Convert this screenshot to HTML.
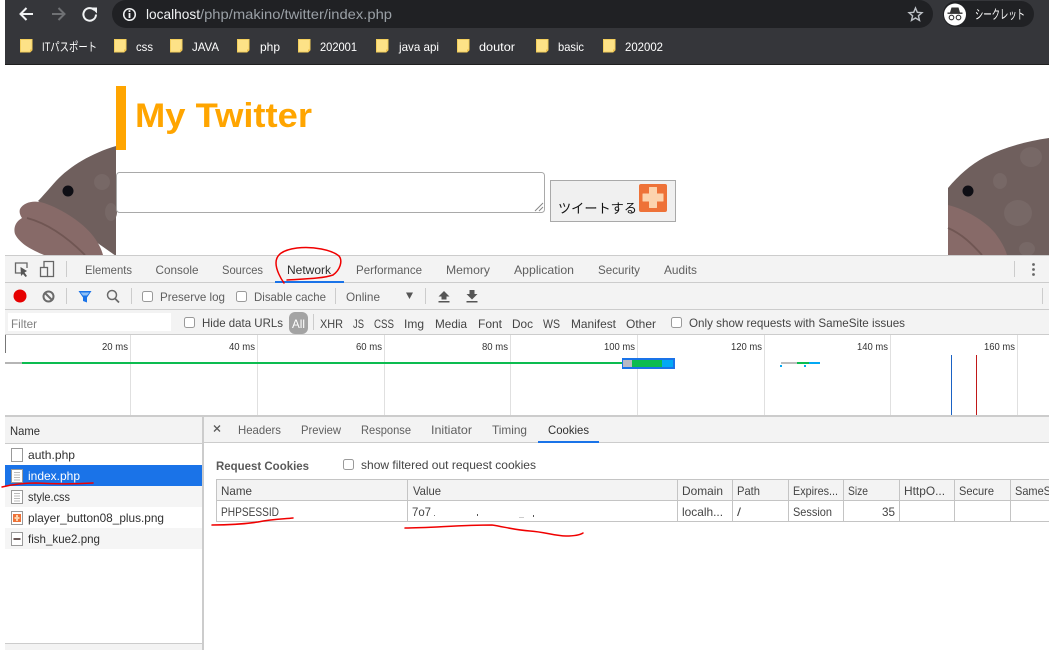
<!DOCTYPE html>
<html lang="ja">
<head>
<meta charset="utf-8">
<title>My Twitter</title>
<style>
html,body{margin:0;padding:0;background:#fff;width:1049px;height:650px;overflow:hidden}
svg{display:block}
text{font-family:"Liberation Sans","Noto Sans CJK JP",sans-serif;font-size:12px;fill:#4a4a4a}
.t{fill:#5f5f5f}
.d{fill:#303030}
.b{fill:#fff;font-size:12px}
.l{fill:#444}
.m{font-size:10px;fill:#333}
</style>
</head>
<body>
<svg width="1049" height="650" viewBox="0 0 1049 650" xmlns="http://www.w3.org/2000/svg">
<defs>
<g id="fold"><path d="M.5.5H12V11L10 13H.5Z" fill="#fde287" stroke="#f3cf5c"/><path d="M10 13V10.500H12.500" fill="#eec04a"/></g>
</defs>

<!-- browser chrome -->
<rect x="5" y="0" width="1044" height="64" fill="#35363a"/>
<rect x="5" y="64" width="1044" height="1" fill="#1f1f1f"/>
<rect x="112" y="0" width="821" height="28" rx="14" fill="#202124"/>
<path d="M33 14H21M26.500 8L20.500 14L26.500 20" fill="none" stroke="#f1f3f4" stroke-width="2"/>
<path d="M52 14H64M58.500 8L64.500 14L58.500 20" fill="none" stroke="#6f7174" stroke-width="2"/>
<path d="M96 14.500A6.300 6.300 0 1 1 94.200 10" fill="none" stroke="#f1f3f4" stroke-width="2"/>
<path d="M91 7.500H97V13.500Z" fill="#f1f3f4"/>
<circle cx="129.500" cy="14.500" r="5.800" fill="none" stroke="#f1f3f4" stroke-width="1.500"/>
<rect x="128.600" y="13" width="1.800" height="5" fill="#f1f3f4"/><rect x="128.600" y="10.200" width="1.800" height="1.800" fill="#f1f3f4"/>
<text x="146" y="19" textLength="54" lengthAdjust="spacingAndGlyphs" style="font-size:14px;fill:#f1f3f4">localhost</text>
<text x="200" y="19" textLength="192" lengthAdjust="spacingAndGlyphs" style="font-size:14px;fill:#9aa0a6">/php/makino/twitter/index.php</text>
<path d="M915.500 8L917.300 12.300L922 12.700L918.400 15.800L919.500 20.400L915.500 18L911.500 20.400L912.600 15.800L909 12.700L913.700 12.300Z" fill="none" stroke="#bdc1c6" stroke-width="1.400"/>
<rect x="943" y="1" width="91" height="26" rx="13" fill="#202124"/>
<circle cx="955" cy="14.500" r="11" fill="#fff"/>
<path d="M950 12.500L951.500 7.500H958.500L960 12.500Z" fill="#333"/><rect x="947.500" y="12.500" width="15" height="1.400" fill="#333"/>
<circle cx="951.500" cy="17.500" r="2.300" fill="none" stroke="#333" stroke-width="1.100"/><circle cx="958.500" cy="17.500" r="2.300" fill="none" stroke="#333" stroke-width="1.100"/>
<text x="975" y="19" textLength="50" lengthAdjust="spacingAndGlyphs" class="b" style="font-size:13px">シークレット</text>

<!-- bookmarks -->
<use href="#fold" x="20" y="39"/><text x="42" y="51" textLength="55" lengthAdjust="spacingAndGlyphs" class="b">ITパスポート</text>
<use href="#fold" x="114" y="39"/><text x="136" y="51" textLength="17" lengthAdjust="spacingAndGlyphs" class="b">css</text>
<use href="#fold" x="170" y="39"/><text x="192" y="51" textLength="27" lengthAdjust="spacingAndGlyphs" class="b">JAVA</text>
<use href="#fold" x="237" y="39"/><text x="260" y="51" textLength="20" lengthAdjust="spacingAndGlyphs" class="b">php</text>
<use href="#fold" x="298" y="39"/><text x="320" y="51" textLength="37" lengthAdjust="spacingAndGlyphs" class="b">202001</text>
<use href="#fold" x="376" y="39"/><text x="399" y="51" textLength="40" lengthAdjust="spacingAndGlyphs" class="b">java api</text>
<use href="#fold" x="457" y="39"/><text x="479" y="51" textLength="36" lengthAdjust="spacingAndGlyphs" class="b">doutor</text>
<use href="#fold" x="536" y="39"/><text x="558" y="51" textLength="26" lengthAdjust="spacingAndGlyphs" class="b">basic</text>
<use href="#fold" x="603" y="39"/><text x="625" y="51" textLength="38" lengthAdjust="spacingAndGlyphs" class="b">202002</text>

<!-- page -->
<rect x="116" y="86" width="10" height="64" fill="#ffa500"/>
<text x="135" y="127" textLength="177" lengthAdjust="spacingAndGlyphs" style="font-size:34px;font-weight:bold;fill:#ffa500">My Twitter</text>

<!-- left fish -->
<path d="M116 146C92 153 70 166 56 181C48 190 42 197 38 201L116 256Z" fill="#6f5f5d"/>
<path d="M20 209C24 202 34 200 44 203C62 209 86 224 96 240C100 246 102 251 103 255H44C32 250 20 244 15 234C13 226 17 221 22 218C20 215 19 212 20 209Z" fill="#876a68"/>
<path d="M27 218C46 223 66 236 85 255" fill="none" stroke="#705653" stroke-width="1.800"/>
<circle cx="68" cy="191" r="5.500" fill="#0e0e14"/>
<ellipse cx="102" cy="182" rx="8" ry="8" fill="#776866"/>
<ellipse cx="111" cy="212" rx="6" ry="9" fill="#776866"/>

<!-- right fish -->
<path d="M948 188C958 176 970 165 985 157C1005 147 1028 141 1049 138V255H948Z" fill="#6f5f5d"/>
<path d="M948 205C965 209 985 221 995 233C1001 241 1005 248 1007 255H948Z" fill="#876a68"/>
<path d="M948 228C962 234 972 244 982 255" fill="none" stroke="#705653" stroke-width="1.800"/>
<circle cx="968" cy="191" r="5.500" fill="#0e0e14"/>
<ellipse cx="1031" cy="157" rx="11" ry="10" fill="#776866"/>
<ellipse cx="1000" cy="181" rx="7" ry="8" fill="#776866"/>
<ellipse cx="1018" cy="213" rx="14" ry="13" fill="#776866"/>
<ellipse cx="1027" cy="249" rx="8" ry="7" fill="#776866"/>

<!-- form -->
<rect x="116.500" y="172.500" width="428" height="40" rx="3" fill="#fff" stroke="#a9a9a9"/>
<path d="M543 203L535 211M543 207L539 211" stroke="#888" stroke-width="1"/>
<rect x="550.500" y="180.500" width="125" height="41" fill="#f0f0f0" stroke="#a9a9a9"/>
<text x="558" y="213" textLength="79" lengthAdjust="spacingAndGlyphs" style="font-size:13.300px;fill:#111">ツイートする</text>
<rect x="639" y="184" width="28" height="28" rx="2" fill="#ee7238"/>
<path d="M649.500 187.500H656.500V194H663V201H656.500V207.500H649.500V201H643V194H649.500Z" fill="#fcd3ad" stroke="#fcd3ad" stroke-linejoin="round"/>

<!-- devtools base -->
<rect x="5" y="255" width="1044" height="395" fill="#fff"/>
<rect x="5" y="255" width="1044" height="80" fill="#f3f3f3"/>
<rect x="5" y="255" width="1044" height="1" fill="#ccc"/>
<rect x="5" y="282" width="1044" height="1" fill="#ccc"/>
<rect x="5" y="309" width="1044" height="1" fill="#ccc"/>
<rect x="5" y="334" width="1044" height="1" fill="#ccc"/>

<!-- row 1 -->
<path d="M22 273H15.500V263H27V268" fill="none" stroke="#666" stroke-width="1.300"/>
<path d="M20.500 267L27 271L24.500 272.500L27 276L25.500 277L23 274L21 276Z" fill="#555"/>
<rect x="40.500" y="267.500" width="7" height="9" fill="none" stroke="#666" stroke-width="1.300"/>
<path d="M44 267V261.500H53.500V276.500H47.500" fill="none" stroke="#666" stroke-width="1.300"/>
<rect x="66" y="261" width="1" height="16" fill="#ccc"/>
<text x="85" y="274" textLength="47" lengthAdjust="spacingAndGlyphs" class="t">Elements</text>
<text x="155.500" y="274" textLength="43" lengthAdjust="spacingAndGlyphs" class="t">Console</text>
<text x="222" y="274" textLength="41" lengthAdjust="spacingAndGlyphs" class="t">Sources</text>
<text x="287" y="274" textLength="44" lengthAdjust="spacingAndGlyphs" class="d">Network</text>
<rect x="275" y="281" width="69" height="2" fill="#1a73e8"/>
<text x="356" y="274" textLength="66" lengthAdjust="spacingAndGlyphs" class="t">Performance</text>
<text x="446" y="274" textLength="44" lengthAdjust="spacingAndGlyphs" class="t">Memory</text>
<text x="514" y="274" textLength="60" lengthAdjust="spacingAndGlyphs" class="t">Application</text>
<text x="598" y="274" textLength="42" lengthAdjust="spacingAndGlyphs" class="t">Security</text>
<text x="664" y="274" textLength="33" lengthAdjust="spacingAndGlyphs" class="t">Audits</text>
<rect x="1014" y="261" width="1" height="16" fill="#ccc"/>
<circle cx="1033.500" cy="264.500" r="1.400" fill="#666"/><circle cx="1033.500" cy="269.500" r="1.400" fill="#666"/><circle cx="1033.500" cy="274.500" r="1.400" fill="#666"/>

<!-- row 2 -->
<circle cx="20" cy="296" r="6.500" fill="#e60000"/>
<circle cx="48.500" cy="296.500" r="5" fill="none" stroke="#6a6a6a" stroke-width="2"/>
<path d="M45 293L52 300" stroke="#6a6a6a" stroke-width="2"/>
<rect x="66" y="288" width="1" height="16" fill="#ccc"/>
<path d="M78.500 291H91.500L87 297.500V302.500L83 301V297.500Z" fill="#1a73e8"/>
<path d="M80.500 292.500H89.500L87 295.500H83Z" fill="#8fc0f5"/>
<circle cx="112" cy="295" r="4.500" fill="none" stroke="#6a6a6a" stroke-width="1.500"/>
<path d="M115 298.500L119 302.500" stroke="#6a6a6a" stroke-width="1.800"/>
<rect x="131" y="288" width="1" height="16" fill="#ccc"/>
<rect x="142.500" y="291.500" width="10" height="10" rx="2" fill="#fff" stroke="#9a9a9a"/>
<text x="160" y="301" textLength="65" lengthAdjust="spacingAndGlyphs" class="t">Preserve log</text>
<rect x="236.500" y="291.500" width="10" height="10" rx="2" fill="#fff" stroke="#9a9a9a"/>
<text x="254" y="301" textLength="72" lengthAdjust="spacingAndGlyphs" class="t">Disable cache</text>
<rect x="335" y="288" width="1" height="16" fill="#ccc"/>
<text x="346" y="301" textLength="34" lengthAdjust="spacingAndGlyphs" class="t">Online</text>
<path d="M406 292.500H413L409.500 299Z" fill="#555"/>
<rect x="425" y="288" width="1" height="16" fill="#ccc"/>
<path d="M444 291L449.500 296.500H446.500V299.500H441.500V296.500H438.500Z M438.500 301H449.500V302.500H438.500Z" fill="#555"/>
<path d="M469.500 290H474.500V294H477.500L472 299.500L466.500 294H469.500Z M466.500 301H477.500V302.500H466.500Z" fill="#555"/>
<rect x="1042" y="288" width="1" height="16" fill="#ccc"/>

<!-- row 3 -->
<rect x="8" y="313" width="163" height="18" fill="#fff"/>
<text x="11" y="328" textLength="26" lengthAdjust="spacingAndGlyphs" style="fill:#808080">Filter</text>
<rect x="184.500" y="317.500" width="10" height="10" rx="2" fill="#fff" stroke="#9a9a9a"/>
<text x="202" y="327" textLength="81" lengthAdjust="spacingAndGlyphs" class="l">Hide data URLs</text>
<rect x="289" y="312" width="19" height="22" rx="6" fill="#a3a3a3"/>
<text x="292" y="328" textLength="13" lengthAdjust="spacingAndGlyphs" style="fill:#fff">All</text>
<rect x="313" y="314" width="1" height="16" fill="#ccc"/>
<text x="320" y="328" textLength="23" lengthAdjust="spacingAndGlyphs" class="l">XHR</text>
<text x="353" y="328" textLength="11" lengthAdjust="spacingAndGlyphs" class="l">JS</text>
<text x="374" y="328" textLength="20" lengthAdjust="spacingAndGlyphs" class="l">CSS</text>
<text x="404" y="328" textLength="20" lengthAdjust="spacingAndGlyphs" class="l">Img</text>
<text x="435" y="328" textLength="32" lengthAdjust="spacingAndGlyphs" class="l">Media</text>
<text x="478" y="328" textLength="24" lengthAdjust="spacingAndGlyphs" class="l">Font</text>
<text x="512" y="328" textLength="21" lengthAdjust="spacingAndGlyphs" class="l">Doc</text>
<text x="543" y="328" textLength="17" lengthAdjust="spacingAndGlyphs" class="l">WS</text>
<text x="571" y="328" textLength="45" lengthAdjust="spacingAndGlyphs" class="l">Manifest</text>
<text x="626" y="328" textLength="30" lengthAdjust="spacingAndGlyphs" class="l">Other</text>
<rect x="671.500" y="317.500" width="10" height="10" rx="2" fill="#fff" stroke="#9a9a9a"/>
<text x="689" y="327" textLength="216" lengthAdjust="spacingAndGlyphs" class="l">Only show requests with SameSite issues</text>

<!-- timeline -->
<rect x="5" y="335" width="1" height="18" fill="#777"/>
<g fill="#e0e0e0">
<rect x="130" y="335" width="1" height="80"/><rect x="257" y="335" width="1" height="80"/><rect x="384" y="335" width="1" height="80"/><rect x="510" y="335" width="1" height="80"/><rect x="637" y="335" width="1" height="80"/><rect x="764" y="335" width="1" height="80"/><rect x="890" y="335" width="1" height="80"/><rect x="1017" y="335" width="1" height="80"/>
</g>
<text x="102" y="350" textLength="26" lengthAdjust="spacingAndGlyphs" class="m">20 ms</text>
<text x="229" y="350" textLength="26" lengthAdjust="spacingAndGlyphs" class="m">40 ms</text>
<text x="356" y="350" textLength="26" lengthAdjust="spacingAndGlyphs" class="m">60 ms</text>
<text x="482" y="350" textLength="26" lengthAdjust="spacingAndGlyphs" class="m">80 ms</text>
<text x="604" y="350" textLength="31" lengthAdjust="spacingAndGlyphs" class="m">100 ms</text>
<text x="731" y="350" textLength="31" lengthAdjust="spacingAndGlyphs" class="m">120 ms</text>
<text x="857" y="350" textLength="31" lengthAdjust="spacingAndGlyphs" class="m">140 ms</text>
<text x="984" y="350" textLength="31" lengthAdjust="spacingAndGlyphs" class="m">160 ms</text>
<rect x="5" y="362" width="17" height="2" fill="#b5b5b5"/>
<rect x="22" y="362" width="600" height="2" fill="#0cbc50"/>
<rect x="622" y="358" width="53" height="11" fill="#1a73e8"/>
<rect x="623" y="360" width="9" height="7" fill="#b9b9c4"/>
<rect x="632" y="360" width="30" height="7" fill="#0cbc50"/>
<rect x="662" y="360" width="11" height="7" fill="#03a9f4"/>
<rect x="781" y="362" width="16" height="2" fill="#bdbdbd"/>
<rect x="797" y="362" width="12" height="2" fill="#0cbc50"/>
<rect x="809" y="362" width="11" height="2" fill="#03a9f4"/>
<rect x="780" y="365" width="2" height="2" fill="#03a9f4"/>
<rect x="804" y="365" width="2" height="2" fill="#03a9f4"/>
<rect x="951" y="355" width="1" height="60" fill="#1a62c4"/>
<rect x="976" y="355" width="1" height="60" fill="#c01818"/>
<rect x="5" y="415" width="1044" height="2" fill="#ccc"/>

<!-- left panel -->
<rect x="5" y="417" width="197" height="26" fill="#f3f3f3"/>
<rect x="5" y="443" width="197" height="1" fill="#ccc"/>
<rect x="202" y="417" width="2" height="233" fill="#ccc"/>
<text x="10" y="435" textLength="30" lengthAdjust="spacingAndGlyphs" class="d">Name</text>
<rect x="5" y="465" width="197" height="21" fill="#1a73e8"/>
<rect x="5" y="486" width="197" height="21" fill="#f5f5f5"/>
<rect x="5" y="528" width="197" height="21" fill="#f5f5f5"/>
<rect x="11.500" y="448.500" width="11" height="13" fill="#fff" stroke="#999"/>
<rect x="11.500" y="469.500" width="11" height="13" fill="#fff" stroke="#999"/>
<path d="M14 472.500H20M14 475H20M14 477.500H20M14 480H20" stroke="#bbb"/>
<rect x="11.500" y="490.500" width="11" height="13" fill="#fff" stroke="#999"/>
<path d="M14 493.500H20M14 496H20M14 498.500H20M14 501H20" stroke="#bbb"/>
<rect x="11.500" y="511.500" width="11" height="13" fill="#fff" stroke="#999"/>
<rect x="13" y="514" width="8" height="8" fill="#ee7238"/><path d="M17 515V521M14.500 518H19.500" stroke="#fcd3ad" stroke-width="2"/>
<rect x="11.500" y="532.500" width="11" height="13" fill="#fff" stroke="#999"/>
<path d="M13.500 539H20.500" stroke="#6b5a58" stroke-width="2"/>
<text x="28" y="459" textLength="47" lengthAdjust="spacingAndGlyphs" class="d">auth.php</text>
<text x="28" y="480" textLength="52" lengthAdjust="spacingAndGlyphs" style="fill:#fff">index.php</text>
<text x="28" y="501" textLength="42" lengthAdjust="spacingAndGlyphs" class="d">style.css</text>
<text x="28" y="522" textLength="136" lengthAdjust="spacingAndGlyphs" class="d">player_button08_plus.png</text>
<text x="28" y="543" textLength="72" lengthAdjust="spacingAndGlyphs" class="d">fish_kue2.png</text>
<rect x="5" y="643" width="197" height="1" fill="#ccc"/>
<rect x="5" y="644" width="197" height="6" fill="#f3f3f3"/>

<!-- right tabs -->
<rect x="204" y="417" width="845" height="25" fill="#f3f3f3"/>
<rect x="204" y="442" width="845" height="1" fill="#ccc"/>
<path d="M214 425.500L220 431.500M220 425.500L214 431.500" stroke="#5a5a5a" stroke-width="1.300"/>
<text x="238" y="434" textLength="43" lengthAdjust="spacingAndGlyphs" class="t">Headers</text>
<text x="301" y="434" textLength="40" lengthAdjust="spacingAndGlyphs" class="t">Preview</text>
<text x="361" y="434" textLength="50" lengthAdjust="spacingAndGlyphs" class="t">Response</text>
<text x="431" y="434" textLength="41" lengthAdjust="spacingAndGlyphs" class="t">Initiator</text>
<text x="492" y="434" textLength="35" lengthAdjust="spacingAndGlyphs" class="t">Timing</text>
<text x="548" y="434" textLength="41" lengthAdjust="spacingAndGlyphs" class="d">Cookies</text>
<rect x="538" y="441" width="61" height="2" fill="#1a73e8"/>

<!-- cookies -->
<text x="216" y="470" textLength="93" lengthAdjust="spacingAndGlyphs" style="font-weight:bold;fill:#5a5a5a">Request Cookies</text>
<rect x="343.500" y="459.500" width="10" height="10" rx="2" fill="#fff" stroke="#9a9a9a"/>
<text x="361" y="469" textLength="175" lengthAdjust="spacingAndGlyphs" class="l">show filtered out request cookies</text>
<rect x="216" y="480" width="833" height="20" fill="#f3f3f3"/>
<g fill="#c4c4c4">
<rect x="216" y="479" width="833" height="1"/><rect x="216" y="500" width="833" height="1"/><rect x="216" y="521" width="833" height="1"/>
<rect x="216" y="479" width="1" height="43"/><rect x="407" y="479" width="1" height="43"/><rect x="677" y="479" width="1" height="43"/><rect x="732" y="479" width="1" height="43"/><rect x="788" y="479" width="1" height="43"/><rect x="843" y="479" width="1" height="43"/><rect x="899" y="479" width="1" height="43"/><rect x="954" y="479" width="1" height="43"/><rect x="1010" y="479" width="1" height="43"/>
</g>
<text x="221" y="495" textLength="31" lengthAdjust="spacingAndGlyphs" class="l">Name</text>
<text x="413" y="495" textLength="28" lengthAdjust="spacingAndGlyphs" class="l">Value</text>
<text x="682" y="495" textLength="41" lengthAdjust="spacingAndGlyphs" class="l">Domain</text>
<text x="737" y="495" textLength="23" lengthAdjust="spacingAndGlyphs" class="l">Path</text>
<text x="793" y="495" textLength="45" lengthAdjust="spacingAndGlyphs" class="l">Expires...</text>
<text x="848" y="495" textLength="20" lengthAdjust="spacingAndGlyphs" class="l">Size</text>
<text x="904" y="495" textLength="41" lengthAdjust="spacingAndGlyphs" class="l">HttpO...</text>
<text x="959" y="495" textLength="35" lengthAdjust="spacingAndGlyphs" class="l">Secure</text>
<text x="1015" y="495" textLength="36" lengthAdjust="spacingAndGlyphs" class="l">SameS</text>
<text x="221" y="516" textLength="58" lengthAdjust="spacingAndGlyphs" class="l">PHPSESSID</text>
<text x="412" y="516" textLength="19" lengthAdjust="spacingAndGlyphs" class="l">7o7</text>
<rect x="434" y="515" width="1" height="1" fill="#777"/><rect x="477" y="514" width="1" height="2" fill="#555"/><rect x="519" y="517" width="5" height="1" fill="#ccc"/><rect x="533" y="515" width="1" height="2" fill="#555"/>
<text x="682" y="516" textLength="41" lengthAdjust="spacingAndGlyphs" class="l">localh...</text>
<text x="737" y="516" textLength="4" lengthAdjust="spacingAndGlyphs" class="l">/</text>
<text x="793" y="516" textLength="39" lengthAdjust="spacingAndGlyphs" class="l">Session</text>
<text x="882" y="516" textLength="13" lengthAdjust="spacingAndGlyphs" class="l">35</text>

<!-- red annotations -->
<g fill="none" stroke="#f00000" stroke-width="1.500" stroke-linecap="round" stroke-linejoin="round">
<path d="M284 283C281 279 276 270 276 263C276 255 282 250 297 248C313 246 332 250 339 256C343 261 340 270 333 275C322 279 298 279 287 280"/>
<path d="M2 487C14 484 24 483 36 483C54 484 76 484 93 483"/>
<path d="M212 525C230 525 245 524 258 522C272 519 284 519 293 518"/>
<path d="M405 528C430 528 460 525 492 525C505 527 515 530 530 531C545 532 555 536 566 536C574 536 580 535 583 533"/>
</g>
</svg>
</body>
</html>
